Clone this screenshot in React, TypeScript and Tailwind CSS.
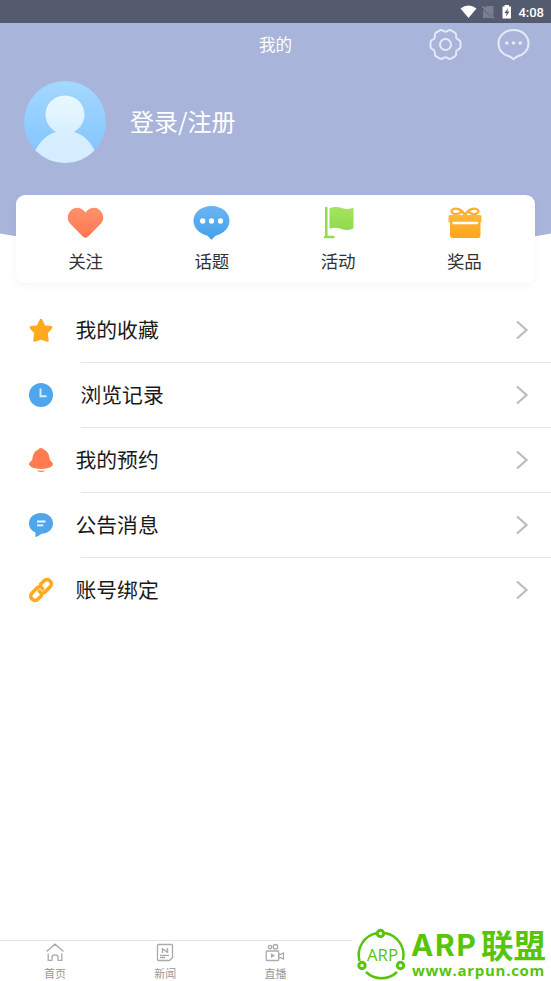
import cn from "clsx"
import type { ReactNode } from "react"

// Top shortcuts
const shortcuts: { label: string; icon: ReactNode }[] = [
    {
        label: "关注",
        icon: (
            <svg width="38" height="36" viewBox="0 0 38 36">
                <path d="M18.500 7.500C22 2.500 28.500 1 33 5.300C37.500 9.700 37.100 15.500 33 19.500L21 31.700Q18.500 34 16 31.700L4 19.500C-.1 15.500-.5 9.700 4 5.300C8.500 1 15 2.500 18.500 7.500Z" fill="url(#red)" />
            </svg>
        ),
    },
    {
        label: "话题",
        icon: (
            <svg width="38" height="36" viewBox="0 0 38 36">
                <path d="M18.500 1C28.800 1 36.500 7.500 36.500 15.700C36.500 22.500 31.500 28.200 22.500 30.700L19.300 34Q18.500 35 17.700 34L14.500 30.700C5.500 28.200 .5 22.500 .5 15.700C.5 7.500 8.200 1 18.500 1Z" fill="url(#blue)" />
                <circle cx="9.700" cy="16" r="2.700" fill="#fff" />
                <circle cx="18.500" cy="16" r="2.700" fill="#fff" />
                <circle cx="27.500" cy="16" r="2.700" fill="#fff" />
            </svg>
        ),
    },
    {
        label: "活动",
        icon: (
            <svg width="38" height="36" viewBox="0 0 38 36">
                <path d="M6.300 3V31M5 32H13.500" stroke="#91dc4e" strokeWidth="2.500" strokeLinecap="round" />
                <path d="M9.500 3.300C14.500 1.200 18.500 2 22.500 3.200C26.500 4.400 29 4 32.500 3Q33.500 2.700 33.500 3.700V22.500Q33.500 23.500 32.500 23.800C28.500 25.500 25.500 25.300 21.500 23.900C17.500 22.700 13.500 22.500 10.500 23.500Q9.500 23.800 9.500 23Z" fill="url(#green)" />
            </svg>
        ),
    },
    {
        label: "奖品",
        icon: (
            <svg width="38" height="36" viewBox="0 0 38 36">
                <path d="M19 10C16 4 9 2 6 5C4.500 7 7 9.500 11 9C13.500 8.700 14.500 7 16 7M19 10C22 4 29 2 32 5C33.500 7 31 9.500 27 9C24.500 8.700 23.500 7 22 7" fill="none" stroke="#ffae2d" strokeWidth="2.200" strokeLinecap="round" />
                <path d="M4 10H34Q35.500 10 35.500 11.500V16Q35.500 17.500 34.500 17.500V30Q34.500 33 31.500 33H7Q4 33 4 30V17.500Q2.500 17.500 2.500 16V11.500Q2.500 10 4 10Z" fill="url(#orange)" />
                <path d="M7.500 18H31" stroke="#fff" strokeWidth="2.400" strokeLinecap="round" />
            </svg>
        ),
    },
]

// List rows
const rows: { label: string; indent?: boolean; icon: ReactNode }[] = [
    {
        label: "我的收藏",
        icon: <path d="M12 2.200L15 8.600L22 9.500L17.200 14.800L18.400 22.300L12 20.200L5.600 22.300L6.800 14.800L2 9.500L9 8.600Z" fill="#ffa921" stroke="#ffa921" strokeWidth="2.800" strokeLinejoin="round" />,
    },
    {
        label: "浏览记录",
        indent: true,
        icon: (
            <>
                <circle cx="12" cy="12" r="12" fill="#4fa6ed" />
                <path d="M11.500 5.500V13.200H17.500" fill="none" stroke="#d9eefd" strokeWidth="1.900" />
            </>
        ),
    },
    {
        label: "我的预约",
        icon: (
            <>
                <path d="M12 0C13.300 0 14.200 .8 15 1.700C18.500 3 20 6.200 20.500 10C20.800 12 21.500 13 23 14C24.300 15 24.200 17 23 18C20.500 20.200 16.500 21 12 21C7.500 21 3.500 20.200 1 18C-.2 17-.3 15 1 14C2.500 13 3.200 12 3.500 10C4 6.200 5.500 3 9 1.700C9.800 .8 10.700 0 12 0Z" fill="#ff7b52" />
                <path d="M8.500 22.700Q12 24 15.500 22.700" stroke="#ff7b52" strokeWidth="1.100" fill="none" />
            </>
        ),
    },
    {
        label: "公告消息",
        icon: (
            <>
                <path d="M12 0C19 0 24 4.500 24 10.500C24 16.500 19 20.700 12.500 20.700C10.500 22.300 8.500 23.400 6.800 24C6.200 24 6.500 22 6.500 19.500C2.500 17.800 0 14.700 0 10.500C0 4.500 5 0 12 0Z" fill="#4fa6ed" />
                <path d="M8 8.500H16.500M8 12.400H14.300" stroke="#edf7ff" strokeWidth="1.900" />
            </>
        ),
    },
    {
        label: "账号绑定",
        icon: (
            <g transform="rotate(-45 12 12)" fill="none" stroke="#ffa921" strokeWidth="3.500" strokeLinecap="round">
                <path d="M8.300 16.300H3.300C-2.100 16.300-2.100 7.800 3.300 7.800H10.500C13.500 7.800 14.800 10 14 12.500" />
                <path d="M15.700 7.700H20.700C26.100 7.700 26.100 16.200 20.700 16.200H13.500C10.500 16.200 9.200 14 10 11.500" />
            </g>
        ),
    },
]

const tabs: { label: string; icon: ReactNode }[] = [
    { label: "首页", icon: <path d="M1.500 8.500L10 1.200L18.500 8.500M3.200 10.500V17.300H7V14.500C7 11 13 11 13 14.500V17.300H16.800V10.500" /> },
    {
        label: "新闻",
        icon: (
            <>
                <path d="M3.500 1.500H16.500Q17.500 1.500 17.500 2.500V14.500L14.500 17.500H3.500Q2.500 17.500 2.500 16.500V2.500Q2.500 1.500 3.500 1.500ZM5 12.300H14M5 14.500H10" />
                <path d="M7.500 10V5M12.500 10V5M7.500 5.500L12.500 9.500" strokeWidth="1.400" />
            </>
        ),
    },
    {
        label: "直播",
        icon: (
            <>
                <rect x="1.200" y="8" width="12.500" height="9.500" rx="1" />
                <path d="M14 11.500H15L18.500 10V16L15 14.500H14" />
                <circle cx="5" cy="4" r="1.700" />
                <circle cx="10.500" cy="3.700" r="2.200" />
                <path d="M6 10.300V15L10 12.700Z" fill="#aaa" stroke="none" />
            </>
        ),
    },
]

function Gradients() {
    return (
        <svg className="absolute h-0 w-0">
            <defs>
                <linearGradient id="red" x2="0" y2="1"><stop stopColor="#ff916b" /><stop offset="1" stopColor="#ff7850" /></linearGradient>
                <linearGradient id="blue" x2="0" y2="1"><stop stopColor="#6ab5f3" /><stop offset="1" stopColor="#45a0eb" /></linearGradient>
                <linearGradient id="green" x2="0" y2="1"><stop stopColor="#a6e362" /><stop offset="1" stopColor="#8fda4c" /></linearGradient>
                <linearGradient id="orange" x2="0" y2="1"><stop stopColor="#ffb838" /><stop offset="1" stopColor="#ffa51b" /></linearGradient>
            </defs>
        </svg>
    )
}

function StatusBar() {
    return (
        <div className="flex h-[23px] items-center justify-end bg-[#555b6e] pr-[7px] text-white">
            <svg width="56" height="16" viewBox="0 0 56 16">
                <path d="M.5 4.500Q8.500-1.500 16.500 4.500L8.500 14Z" fill="#fff" />
                <path d="M26.500 2H33.500V12L24.500 4ZM23 5.500V14H32Z" fill="#7b7f8d" />
                <path d="M22.500 2.500L34 14.500" stroke="#868a97" strokeWidth="1.300" />
                <path d="M44.500 1H49V2.500H51V14.500H42.500V2.500H44.500Z" fill="#fff" />
                <path d="M48 4L44.500 9H46.500L46 12.500L49.500 7.500H47.300Z" fill="#555b6e" />
            </svg>
            <span className="ml-0.5 mt-px font-[Roboto] text-[13px] font-medium leading-none">4:08</span>
        </div>
    )
}

function Header() {
    return (
        <header className="relative h-[172px] bg-[#a8b4d9]">
            {/* Curved lower edge */}
            <svg className="absolute left-0 top-[172px]" width="551" height="70" viewBox="0 0 551 70">
                <path d="M0 0H551V38.500Q275.500 90 0 38.500Z" fill="#a8b4d9" />
            </svg>
            <div className="grid h-11 grid-cols-3 items-center text-white">
                <span />
                <h1 className="-mt-0.5 text-center text-[16.500px] leading-none">我的</h1>
                <div className="flex justify-end gap-[35px] pr-[21px]">
                    <svg width="33" height="32" viewBox="0 0 33 32" fill="none" stroke="#e6eaf7" strokeWidth="2">
                        {[0, 60, 120, 180, 240, 300].map((angle) => (
                            <path key={angle} transform={`translate(16.500 15.500) rotate(${angle})`} d="M11 -6.350C12 -4.600 15 -4.800 15 -2.200V2.200C15 4.800 12 4.600 11 6.350" />
                        ))}
                        <circle cx="16.500" cy="15.500" r="5.500" />
                    </svg>
                    <svg width="33" height="32" viewBox="0 0 33 32">
                        <path d="M16.500 1C25.500 1 31.500 7 31.500 14.500C31.500 21 26.500 26 20.500 27.300L16.500 30L12.500 27.300C6 26 1.500 21 1.500 14.500C1.500 7 7.500 1 16.500 1Z" fill="none" stroke="#e6eaf7" strokeWidth="2" />
                        <g fill="#e6eaf7">
                            <circle cx="9.800" cy="14" r="1.800" />
                            <circle cx="16.500" cy="14" r="1.800" />
                            <circle cx="23.200" cy="14" r="1.800" />
                        </g>
                    </svg>
                </div>
            </div>
            <div className="ml-6 mt-[14px] flex items-center gap-[24px]">
                <svg width="82" height="82" viewBox="0 0 82 82">
                    <defs>
                        <linearGradient id="sky" x2="0" y2="1"><stop stopColor="#a4d8ff" /><stop offset="1" stopColor="#7fc3ff" /></linearGradient>
                        <linearGradient id="face" x2="0" y2="1"><stop stopColor="#e9f8ff" /><stop offset=".7" stopColor="#d5edff" /></linearGradient>
                        <clipPath id="round"><circle cx="41" cy="41" r="41" /></clipPath>
                    </defs>
                    <g clipPath="url(#round)">
                        <rect width="82" height="82" fill="url(#sky)" />
                        <path d="M41 14.500C52 14.500 60.500 23 60.500 33.500C60.500 41 56 47.500 50 51C60 54 66 60 71 70V82H11V70C16 60 23 53.500 32 51C26 47.500 21.500 41 21.500 33.500C21.500 23 30 14.500 41 14.500Z" fill="url(#face)" />
                    </g>
                </svg>
                <span className="-mt-0.5 text-2xl leading-none text-white">登录/注册</span>
            </div>
        </header>
    )
}

function Watermark() {
    return (
        <div className="absolute bottom-0 right-0 flex h-[56px] w-[199px] bg-white text-[#57c50c]">
            <svg className="shrink-0" width="60" height="56" viewBox="0 0 60 56" fill="none" stroke="currentColor">
                <path d="M33 8A22.500 22.500 0 0 1 51 35M45 47A22.500 22.500 0 0 1 14 47M7.500 36A22.500 22.500 0 0 1 25 8" strokeWidth="2.500" />
                <g strokeWidth="3">
                    <circle cx="28.500" cy="8.500" r="3.200" />
                    <circle cx="10" cy="40.500" r="3.200" />
                    <circle cx="48.500" cy="40.500" r="3.200" />
                </g>
                <text x="30.500" y="36" textAnchor="middle" textLength="31" lengthAdjust="spacingAndGlyphs" className="fill-current font-['Open_Sans'] text-[17px]" stroke="none">ARP</text>
            </svg>
            <div className="flex flex-col pt-[3px]">
                <div className="flex h-[34px] items-center whitespace-nowrap">
                    <span className="-ml-px w-[70px] font-[Inter] text-[30px] font-bold leading-[30px] tracking-[1.700px]">ARP</span>
                    <span className="-mt-0.5 font-['Noto_Sans_CJK_SC'] text-[32.500px] font-bold leading-[30px]">联盟</span>
                </div>
                <span className="font-['Open_Sans'] text-[15px] font-bold leading-[16px] tracking-[0.700px]">www.arpun.com</span>
            </div>
        </div>
    )
}

export default function App() {
    return (
        <div className="relative flex h-[981px] w-[551px] flex-col overflow-hidden bg-white font-['Noto_Sans_CJK_SC',sans-serif]">
            <Gradients />
            <StatusBar />
            <Header />

            <section className="relative mx-4 grid h-[88px] grid-cols-4 rounded-[9px] bg-white px-[7px] shadow-[0_3px_10px_rgba(0,0,0,0.035)]">
                {shortcuts.map((item) => (
                    <button key={item.label} className="flex flex-col items-center pt-[10px]">
                        {item.icon}
                        <span className="-ml-px mt-[11px] text-[17.500px] leading-[18px] text-[#333]">{item.label}</span>
                    </button>
                ))}
            </section>

            <ul className="mt-[15px] flex-1">
                {rows.map((row, i) => (
                    <li key={row.label}>
                        <button className="flex h-16 w-full items-center pl-[29px] pr-[22px]">
                            <svg className="overflow-visible" width="24" height="24" viewBox="0 0 24 24">{row.icon}</svg>
                            <span className={cn("-mt-px flex-1 text-left text-[20.800px] leading-none text-[#1a1a1a]", row.indent ? "ml-[27.500px]" : "ml-[22.500px]")}>{row.label}</span>
                            <svg width="14" height="20" viewBox="0 0 14 20">
                                <path d="M2 1.500L11.500 10L2 18.500" fill="none" stroke="#bdbdbd" strokeWidth="2.300" />
                            </svg>
                        </button>
                        {i < rows.length - 1 && <div className="ml-[81px] h-px bg-[#e5e5e5]" />}
                    </li>
                ))}
            </ul>

            <nav className="grid h-[41px] grid-cols-5 border-t border-[#e2e2e2]">
                {tabs.map((tab) => (
                    <button key={tab.label} className="flex flex-col items-center pt-[2px] text-[#999]">
                        <svg width="20" height="20" viewBox="0 0 20 20" fill="none" stroke="#aaa" strokeWidth="1.300">{tab.icon}</svg>
                        <span className="mt-[4px] text-[11px] leading-[13px]">{tab.label}</span>
                    </button>
                ))}
            </nav>
            <Watermark />
        </div>
    )
}
